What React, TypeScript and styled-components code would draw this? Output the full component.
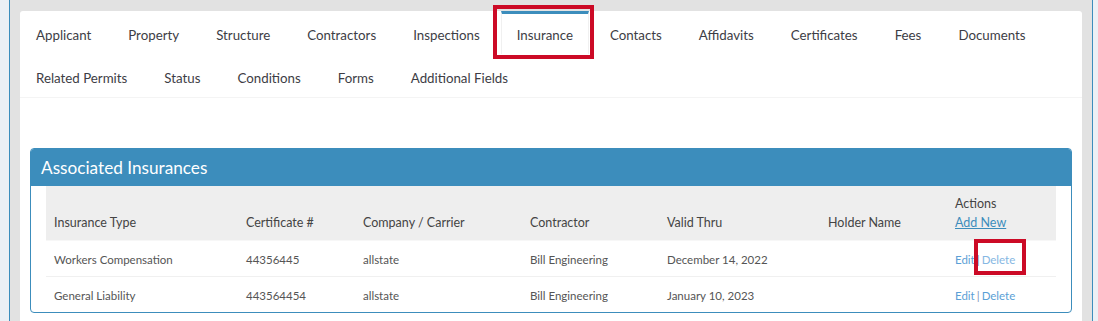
import React from 'react';
import styled, { createGlobalStyle, css } from 'styled-components';

const GlobalStyle = createGlobalStyle`
  body {
    margin: 0;
    background: #ecf0f5;
    font-family: 'Lato', 'Liberation Sans', sans-serif;
    color: #333;
  }
`

const Frame = styled.div`
  margin-left: 9px;
  width: 1062px;
  min-height: 100vh;
  padding: 11px 10px 0;
  background: #e2e2e2;
  border-left: 1px solid #3c8dbc;
  border-right: 1px solid #3c8dbc;
`

const Card = styled.div`
  background: #fff;
  border-radius: 3px;
  min-height: 330px;
`

const TabNav = styled.ul`
  display: flex;
  flex-wrap: wrap;
  margin: 0;
  padding: 0;
  list-style: none;
  border-bottom: 1px solid #f4f4f4;
`

const Tab = styled.li<{ $active?: boolean }>`
  position: relative;
  margin-right: 5px;
  padding: 11px 16px 9px;
  line-height: 20px;
  font-size: 13.3px;
  color: #3d3d45;
  border-top: 3px solid transparent;
  ${p => p.$active && css`
    border-top-color: #3c8dbc;
    border-left: 1px solid #f0f0f0;
    border-right: 1px solid #f0f0f0;
    padding: 11px 15px 9px;
    &::after {
      content: '';
      position: absolute;
      left: -9px;
      right: -6px;
      top: -9px;
      bottom: -5px;
      border: 4px solid #cc0a26;
    }
  `}
`

const TabContent = styled.div`
  padding: 50px 10px 10px;
`

const Panel = styled.div`
  border: 1px solid #3c8dbc;
  border-radius: 4px;
  overflow: hidden;
`

const PanelHeader = styled.div`
  background: #3c8dbc;
  color: #fff;
  font-size: 17.2px;
  line-height: 21px;
  padding: 8px 10px;
`

const PanelBody = styled.div`
  padding: 0 15px;
`

const Table = styled.table`
  width: 100%;
  border-collapse: collapse;
  table-layout: fixed;
`

const Th = styled.th`
  background: #eee;
  text-align: left;
  font-weight: normal;
  font-size: 12.5px;
  line-height: 19px;
  color: #444;
  vertical-align: bottom;
  padding: 8px 8px 8px;
  border-bottom: 1px solid #f7f7f7;
`

const Td = styled.td`
  font-size: 11.5px;
  line-height: 19px;
  color: #555;
  padding: 9px 8px 7px;
  border-top: 1px solid #f0f0f0;
`

const Row = styled.tr`
  &:first-child td {
    border-top: none;
  }
`

const AddLink = styled.a`
  color: #3c8dbc;
  text-decoration: underline;
`

const ActionLink = styled.a<{ $flagged?: boolean }>`
  position: relative;
  color: #5b9fd6;
  text-decoration: none;
  ${p => p.$flagged && css`
    color: #86b7e3;
    &::after {
      content: '';
      position: absolute;
      left: -8px;
      right: -11px;
      top: -14px;
      bottom: -9px;
      border: 4px solid #cc0a26;
    }
  `}
`

const Sep = styled.span`
  color: #8092b8;
  margin: 0 2px;
`

const tabs = [
  'Applicant', 'Property', 'Structure', 'Contractors', 'Inspections', 'Insurance',
  'Contacts', 'Affidavits', 'Certificates', 'Fees', 'Documents',
  'Related Permits', 'Status', 'Conditions', 'Forms', 'Additional Fields',
]

const columns = [
  { title: 'Insurance Type', width: 192 },
  { title: 'Certificate #', width: 117 },
  { title: 'Company / Carrier', width: 167 },
  { title: 'Contractor', width: 137 },
  { title: 'Valid Thru', width: 161 },
  { title: 'Holder Name', width: 127 },
]

const rows = [
  { type: 'Workers Compensation', cert: '44356445', carrier: 'allstate', contractor: 'Bill Engineering', valid: 'December 14, 2022', holder: '' },
  { type: 'General Liability', cert: '443564454', carrier: 'allstate', contractor: 'Bill Engineering', valid: 'January 10, 2023', holder: '' },
]

export default function App() {
  return (
    <>
      <GlobalStyle />
      <Frame>
        <Card>
          <TabNav>
            {tabs.map(t => (
              <Tab key={t} $active={t === 'Insurance'}>{t}</Tab>
            ))}
          </TabNav>
          <TabContent>
            <Panel>
              <PanelHeader>Associated Insurances</PanelHeader>
              <PanelBody>
                <Table>
                  <colgroup>
                    {columns.map(c => <col key={c.title} style={{ width: c.width }} />)}
                    <col />
                  </colgroup>
                  <thead>
                    <tr>
                      {columns.map(c => <Th key={c.title}>{c.title}</Th>)}
                      <Th>Actions<br /><AddLink href="#">Add New</AddLink></Th>
                    </tr>
                  </thead>
                  <tbody>
                    {rows.map((r, i) => (
                      <Row key={r.cert}>
                        <Td>{r.type}</Td>
                        <Td>{r.cert}</Td>
                        <Td>{r.carrier}</Td>
                        <Td>{r.contractor}</Td>
                        <Td>{r.valid}</Td>
                        <Td>{r.holder}</Td>
                        <Td>
                          <ActionLink href="#">Edit</ActionLink>
                          <Sep>|</Sep>
                          <ActionLink href="#" $flagged={i === 0}>Delete</ActionLink>
                        </Td>
                      </Row>
                    ))}
                  </tbody>
                </Table>
              </PanelBody>
            </Panel>
          </TabContent>
        </Card>
      </Frame>
    </>
  )
}
